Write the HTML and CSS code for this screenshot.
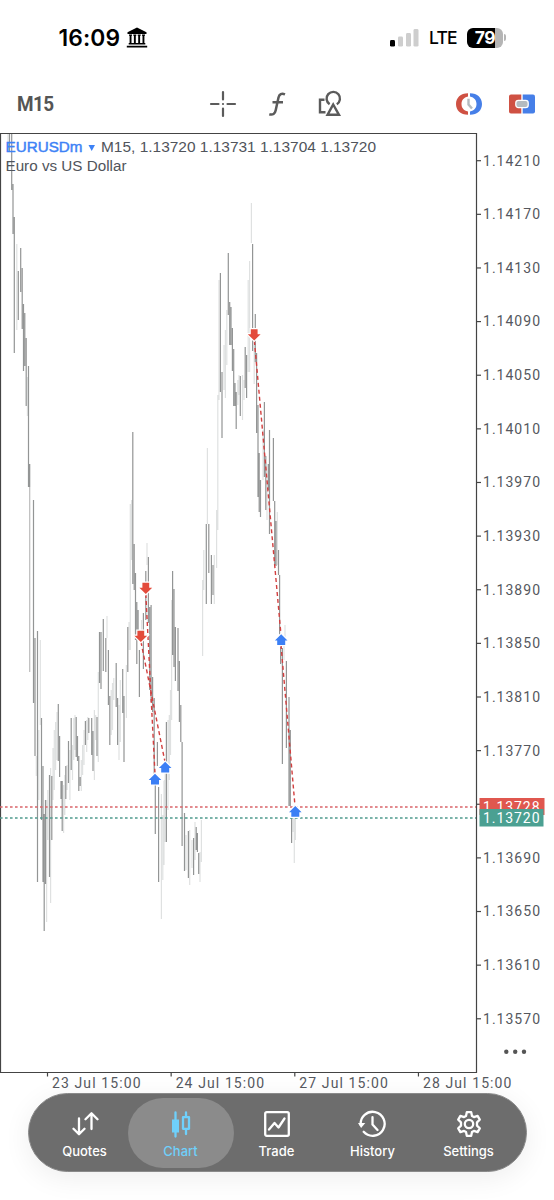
FILE: index.html
```html
<!DOCTYPE html>
<html lang="en">
<head>
    <meta charset="UTF-8">
    <meta name="viewport" content="width=device-width, initial-scale=1.0">
    <title>EURUSDm Chart</title>
    <link rel="stylesheet" href="styles.css">
</head>
<body>
    <header class="status-bar">
        <span class="time">16:09</span>
        <svg class="bank" width="22" height="22" viewBox="0 0 22 22">
            <path d="M11 0.6 L20.5 5.2 V7 H1.5 V5.2 Z M3 7.5h3v1.2H3z M7.3 7.5h3v1.2h-3z M11.7 7.5h3v1.2h-3z M16 7.5h3v1.2h-3z M3.6 8h1.9v8.5H3.6z M7.9 8h1.9v8.5H7.9z M12.2 8h1.9v8.5h-1.9z M16.5 8h1.9v8.5h-1.9z M2.7 16h16.6v1.5H2.7z M0.8 18.7h20.4v1.8H0.8z"/>
        </svg>
        <svg class="signal" width="29" height="18" viewBox="0 0 29 18">
            <rect x="0" y="11" width="5" height="6.6" rx="1.4" fill="#000"/>
            <rect x="8" y="7.5" width="5" height="10.1" rx="1.4" fill="#cecece"/>
            <rect x="16" y="4" width="5" height="13.6" rx="1.4" fill="#cecece"/>
            <rect x="23.5" y="0" width="5" height="17.6" rx="1.4" fill="#cecece"/>
        </svg>
        <span class="network">LTE</span>
        <span class="battery"><span class="level">79</span></span>
        <span class="battery-cap"></span>
    </header>

    <nav class="toolbar">
        <span class="timeframe">M15</span>
        <svg class="cross" width="28" height="28" viewBox="0 0 28 28" fill="none" stroke="#5b5b5b" stroke-width="2.2" stroke-linecap="round">
            <path d="M14 2v7.5M14 18.5V26M2 14h7.5M18.5 14H26M14 14h.01"/>
        </svg>
        <svg class="func" width="20" height="26" viewBox="0 0 20 26" fill="none" stroke="#5b5b5b" stroke-width="2.5">
            <path d="M18 3.4C14.6 2 12.3 3 11.5 6.6L8.7 19.2C8 22.8 5.8 24.4 2.3 23.2M5.5 11.2H16"/>
        </svg>
        <svg class="shapes" width="26" height="27" viewBox="0 0 26 27" fill="none" stroke="#5b5b5b" stroke-width="2.4">
            <path d="M7.5 9.8H3V22.3H8.5M12.6 14.2A6.7 6.7 0 1 1 19.8 14.3M16.2 14.5L22 24.8H10.5Z"/>
        </svg>
        <svg class="sessions" width="28" height="24" viewBox="0 0 28 24">
            <path d="M13 1.2C5.5 1.2 1 5.8 1 12s4.5 10.8 12 10.8v-3.2C8.5 18.5 6.5 15.8 6.5 12S8.5 5.5 13 4.4z" fill="#cf5143"/>
            <path d="M15 1.2c7.5 0 12 4.6 12 10.8s-4.5 10.8-12 10.8v-3.2c4.5-1.1 6.5-3.8 6.5-7.6S19.5 5.5 15 4.4z" fill="#467fe8"/>
            <path d="M13.5 6.8V12.5L17 16.5" fill="none" stroke="#b4bbc0" stroke-width="2.4"/>
        </svg>
        <svg class="order" width="28" height="22" viewBox="0 0 28 22">
            <path d="M3 1.5H13.3V20.5H3A2 2 0 0 1 1 18.5V3.5A2 2 0 0 1 3 1.5z" fill="#cf5143"/>
            <path d="M14.7 1.5H25A2 2 0 0 1 27 3.5V18.5A2 2 0 0 1 25 20.5H14.7z" fill="#467fe8"/>
            <rect x="7.8" y="7.4" width="12.4" height="7.2" rx="2.6" fill="#b4bbc0" stroke="#fff" stroke-width="1.3"/>
        </svg>
    </nav>

    <main>
        <svg class="chart" id="chart" width="554" height="961" viewBox="0 132 554 961">
            <g id="bars"></g>
            <path class="frame" d="M0.5 133.5H476.5V1072.5H0.5Z"/>
            <path class="bid-line" d="M0 807H476"/>
            <path class="ask-line" d="M0 818H476"/>
            <g id="trades"></g>
            <text class="symbol" x="5.5" y="152" textLength="77" lengthAdjust="spacingAndGlyphs">EURUSDm</text>
            <path class="caret" d="M88.5 145H95L91.7 151Z"/>
            <text class="quote" x="101" y="152" textLength="275" lengthAdjust="spacingAndGlyphs">M15, 1.13720 1.13731 1.13704 1.13720</text>
            <text class="quote" x="5.5" y="171" textLength="121" lengthAdjust="spacingAndGlyphs">Euro vs US Dollar</text>
            <g id="axis"></g>
            <rect x="479.5" y="798" width="65" height="17" fill="#e0574f"/>
            <text class="tag" x="483" y="811.5" textLength="56.5">1.13728</text>
            <rect x="479.5" y="809" width="64" height="17.5" fill="#4ba092"/>
            <text class="tag" x="483" y="822.8" textLength="56.5">1.13720</text>
            <g fill="#555">
                <circle cx="506.3" cy="1051.7" r="2.2"/>
                <circle cx="515.2" cy="1051.7" r="2.2"/>
                <circle cx="524" cy="1051.7" r="2.2"/>
            </g>
        </svg>
    </main>

    <footer class="tab-bar">
        <div class="tab">
            <svg width="28" height="28" viewBox="0 0 28 28"><path d="M8 8.5V24M2.5 18.8L8 24.3L13.5 18.8M20.5 19V3.5M14.5 9.2L20.5 3.2L26.5 9.2"/></svg>
            <span>Quotes</span>
        </div>
        <div class="tab active">
            <svg width="28" height="28" viewBox="0 0 28 28"><path class="solid" d="M5 9.5h7v13H5z"/><path d="M8.5 2.5V26.5M19 2.5V7M19 19V24M16 7.2h6v11.6h-6z"/></svg>
            <span>Chart</span>
        </div>
        <div class="tab">
            <svg width="28" height="28" viewBox="0 0 28 28"><rect x="2.2" y="2.2" width="23.6" height="23.6" rx="1.5"/><path d="M6 19.5L11.5 13L15.5 17.5L21.5 8.5"/></svg>
            <span>Trade</span>
        </div>
        <div class="tab">
            <svg width="30" height="28" viewBox="1.5 0 30 28"><path d="M4.2 15A12 12 0 1 1 7.2 21.8M16 7.2V14.5L21 20"/><path class="solid" d="M1.5 13H8.8L4.6 18z"/></svg>
            <span>History</span>
        </div>
        <div class="tab">
            <svg width="28" height="28" viewBox="0 0 28 28"><path d="M11.8 2.2H16.2L17 6L18.9 7.1L22.6 5.9L24.8 9.7L22 12.3V15.7L24.8 18.3L22.6 22.1L18.9 20.9L17 22L16.2 25.8H11.8L11 22L9.1 20.9L5.4 22.1L3.2 18.3L6 15.7V12.3L3.2 9.7L5.4 5.9L9.1 7.1L11 6Z"/><circle cx="14" cy="14" r="4.2"/></svg>
            <span>Settings</span>
        </div>
    </footer>

    <script>
        const NS = "http://www.w3.org/2000/svg";

        // x, high, low of every falling bar
        const down = [
            [9.5,134,152],[11.7,134,190],[13,184,234],[14.3,217,353],[18.3,271,320],[20.7,248,292],[22.2,268,329],
            [23.5,304,371],[24.8,313,366],[26.2,338,406],[28.5,366,487],[29.7,464,487],[33.5,500,703],[35,638,756],
            [37.5,631,882],[41.5,718,820],[43,766,882],[44.2,814,931],[45.5,800,884],[49.5,775,877],[51.8,776,840],
            [58.3,704,761],[59.6,736,777],[61,781,799],[62.2,781,831],[65.8,766,799],[68.5,741,783],[71.2,718,770],
            [76.2,717,757],[77.5,736,761],[78.8,756,791],[80.2,777,786],[85.4,721,745],[88.8,718,733],[91.7,718,755],
            [93,731,771],[97,717,756],[99.5,632,683],[101,632,689],[103.3,619,671],[105.8,638,672],[108.4,650,705],
            [109.8,696,745],[116.2,663,707],[117.6,698,745],[122.7,669,713],[124,696,762],[127.8,627,672],[132.8,432,584],
            [134.2,544,590],[135.5,573,640],[136.8,602,664],[138.1,610,634],[139.4,650,697],[143.4,613,669],[145.8,571,620],
            [148.4,557,623],[149.7,607,690],[151.1,605,702],[152.6,677,712],[154.2,698,775],[155.3,785,834],[157.4,742,766],
            [158.6,787,882],[166.4,722,842],[172.6,571,655],[174,589,667],[175.4,627,681],[178,628,691],[179.4,661,722],
            [180.8,705,742],[182.1,742,846],[184.5,813,871],[188.4,831,878],[193.6,838,875],[196.2,827,850],[197.4,833,852],
            [198.7,853,874],[206.3,524,604],[208.8,524,573],[211.4,555,604],[213,565,595],[220.4,273,392],[222,372,438],
            [228.3,253,315],[229.7,302,345],[231,307,345],[232.4,328,371],[233.7,349,406],[235,383,406],[236.2,392,429],
            [240.3,376,416],[245.2,347,388],[246.6,355,398],[252.6,244,351],[255.3,314,362],[256.6,353,433],[258,405,497],
            [259.2,453,512],[260.5,480,517],[264.4,402,477],[265.8,456,510],[268.3,464,490],[269.5,430,534],[273.4,438,501],
            [274.7,501,565],[276,521,566],[278.5,550,575],[279.6,575,640],[280.6,647,664],[282.4,648,764],[286.4,661,748],
            [289,697,806],[290.3,730,806],[291.6,818,843]
        ];

        // rising bars are drawn lighter
        const up = [
            [8,134,150],[16.8,244,330],[27.4,377,416],[36.3,756,776],[38.8,730,800],[40.3,640,725],[46.6,800,922],
            [47.8,790,840],[50.6,768,903],[53,748,800],[54.3,730,790],[55.6,722,770],[57,712,760],[63.6,785,833],
            [64.8,775,815],[67,765,790],[69.9,750,800],[72.5,745,780],[73.8,718,760],[75,715,750],[81.3,760,791],
            [82.6,745,775],[84,730,765],[86.7,720,752],[87.8,717,740],[94.4,710,780],[95.7,715,740],[98.3,672,762],
            [107,616,638],[111.2,690,735],[112.5,683,730],[113.8,678,700],[119,705,760],[120.3,680,742],[126.4,665,718],
            [129,622,650],[130.3,504,650],[131.6,500,560],[141.5,620,645],[147,543,565],[161.4,794,919],[162.8,815,880],
            [164,780,865],[165.2,770,842],[168,720,810],[169.3,715,780],[170.5,690,755],[171.6,600,720],[186,835,870],
            [189.7,830,885],[192,840,868],[195,822,860],[200,852,882],[201.4,820,862],[202.6,580,656],[203.8,550,590],
            [207.4,448,524],[214.3,555,604],[216.6,510,568],[217.8,395,530],[219,280,400],[224,345,390],[225.4,330,398],
            [226.8,310,365],[237.8,380,405],[239,375,395],[242.5,375,420],[244,380,400],[248.2,280,372],[249.6,261,372],
            [251.4,203,243],[254.2,343,384],[263,430,480],[267,480,520],[277.3,512,565],[284,640,660],[285,625,645],
            [293,818,832],[294.3,818,863],[295.4,818,840]
        ];

        // open x, open y, close x, close y
        const trades = [
            [145.8, 594, 155, 774],
            [141, 642, 165, 762],
            [254.4, 341, 281, 635],
            [281, 645, 295, 806]
        ];

        function add(parent, name, attrs, text) {
            const el = document.createElementNS(NS, name);
            for (const key in attrs) {
                el.setAttribute(key, attrs[key]);
            }
            if (text) el.textContent = text;
            document.getElementById(parent).appendChild(el);
        }

        function drawBars(list, cls) {
            add("bars", "path", {
                class: cls,
                d: list.map(b => `M${b[0]} ${b[1]}V${b[2]}`).join("")
            });
        }

        drawBars(up, "up");
        drawBars([[29.7, 487, 672]], "up mid");
        drawBars(down, "down");

        trades.forEach(t => add("trades", "path", { class: "trade", d: `M${t[0]} ${t[1]}L${t[2]} ${t[3]}` }));

        // sell arrows point down, buy arrows point up
        [[145.8, 588.5], [140.8, 636.5], [254.2, 335]].forEach(p => add("trades", "path", {
            class: "arrow sell",
            d: `M${p[0] - 3.4} ${p[1] - 5.7}h6.8v4.9h3l-6.4 6.4l-6.4 -6.4h3z`
        }));
        [[165.2, 767.3], [155, 779.2], [281.2, 639.7], [295.3, 811.5]].forEach(p => add("trades", "path", {
            class: "arrow buy",
            d: `M${p[0] - 4} ${p[1] + 5.2}h8v-4.5h2.3l-6.3 -6.2l-6.3 6.2h2.3z`
        }));

        // price scale, 40 points per step
        for (let i = 0; i <= 16; i++) {
            const y = 160.7 + i * 53.63;
            add("axis", "path", { class: "tick", d: `M476.5 ${y}h4.5` });
            if (i === 12) continue; // hidden by the price tags
            add("axis", "text", { class: "scale", x: 483, y: y + 4.9, textLength: 57 }, (1.1421 - i * 0.0004).toFixed(5));
        }

        ["23 Jul 15:00", "24 Jul 15:00", "27 Jul 15:00", "28 Jul 15:00"].forEach((label, i) => {
            const x = 47.5 + i * 123.65;
            add("axis", "path", { class: "tick", d: `M${x} 1072.5v4` });
            add("axis", "text", { class: "scale", x: x + 4.5, y: 1088, textLength: 88.5 }, label);
        });
    </script>
</body>
</html>
```
FILE: styles.css
```css
body {
    margin: 0;
    width: 554px;
    height: 1200px;
    overflow: hidden;
    background-color: #fff;
    font-family: Inter, "Liberation Sans", sans-serif;
}

.status-bar {
    display: flex;
    align-items: center;
    height: 75px;
    padding-left: 58.5px;
    box-sizing: border-box;
}

.time {
    width: 67.5px;
    font-size: 22.8px;
    font-weight: 600;
    letter-spacing: 0.1px;
    white-space: nowrap;
}

.signal {
    margin-left: 242px;
}

.network {
    width: 38px;
    margin-left: 10px;
    font-size: 17.5px;
    font-weight: 500;
    letter-spacing: -0.8px;
}

.battery {
    display: flex;
    width: 36px;
    height: 20px;
    border-radius: 6px;
    overflow: hidden;
    background: linear-gradient(to right, #000 79%, #b5b5b5 79%);
}

.level {
    width: 36px;
    text-align: center;
    color: #fff;
    font-size: 17.5px;
    font-weight: 700;
    line-height: 20px;
    letter-spacing: -0.5px;
}

.battery-cap {
    width: 2px;
    height: 7px;
    margin-left: 1px;
    border-radius: 0 3px 3px 0;
    background-color: #b5b5b5;
}

.toolbar {
    display: flex;
    align-items: center;
    height: 57px;
    padding-left: 17px;
}

.timeframe {
    width: 192px;
    color: #555;
    font-family: Roboto, sans-serif;
    font-size: 21px;
    font-weight: 700;
    letter-spacing: -0.6px;
    transform: scaleX(0.9);
    transform-origin: left;
}

.func {
    margin-left: 30px;
}

.shapes {
    margin-left: 30px;
}

.sessions {
    margin-left: 112px;
}

.order {
    margin-left: 25px;
}

.chart {
    display: block;
}

.up, .down {
    fill: none;
    stroke-width: 1.2;
}

.up {
    stroke: #dfe1e1;
}

.up.mid {
    stroke: #bcbcbc;
}

.down {
    stroke: #939595;
}

.frame {
    fill: none;
    stroke: #444;
    stroke-width: 1.2;
}

.tick {
    stroke: #444;
    stroke-width: 1.2;
}

.bid-line, .ask-line {
    stroke-width: 1.3;
    stroke-dasharray: 2.6 2.4;
}

.bid-line {
    stroke: #d9646a;
}

.ask-line {
    stroke: #4f9a8d;
}

.trade {
    stroke: #d23f3f;
    stroke-width: 1.4;
    stroke-dasharray: 4 3;
}

.arrow {
    stroke: #fff;
    stroke-width: 2.4;
    paint-order: stroke;
}

.sell {
    fill: #e34b3b;
}

.buy {
    fill: #3b7ff5;
}

.symbol {
    fill: #3d82f6;
    stroke: #3d82f6;
    stroke-width: 0.45;
    font-family: "Liberation Sans", sans-serif;
    font-size: 15.4px;
}

.caret {
    fill: #3d82f6;
}

.quote {
    fill: #50545b;
    font-family: "Liberation Sans", sans-serif;
    font-size: 15.4px;
}

.scale, .tag {
    fill: #55585e;
    font-family: Roboto, sans-serif;
    font-size: 14px;
}

.tag {
    fill: #fff;
}

.tab-bar {
    display: flex;
    align-items: center;
    width: 499px;
    height: 79px;
    margin-left: 27.5px;
    padding-left: 8px;
    box-sizing: border-box;
    border: 1px solid #8a8a8a;
    border-radius: 40px;
    background-color: #6d6d6d;
    box-shadow: 0 6px 28px rgba(0, 0, 0, 0.07);
}

.tab {
    display: flex;
    flex: none;
    flex-direction: column;
    align-items: center;
    width: 106px;
    height: 70px;
    margin: 0 -5px;
    padding-top: 12px;
    box-sizing: border-box;
    border-radius: 35px;
    color: #fff;
    font-size: 13px;
    font-weight: 500;
}

.tab svg {
    fill: none;
    stroke: currentColor;
    stroke-width: 2.3;
    stroke-linecap: round;
    stroke-linejoin: round;
}

.tab .solid {
    fill: currentColor;
    stroke: none;
}

.tab span {
    margin-top: 5px;
    line-height: 16px;
}

.active {
    background-color: #8b8b8b;
    color: #6fd0fb;
}
```
